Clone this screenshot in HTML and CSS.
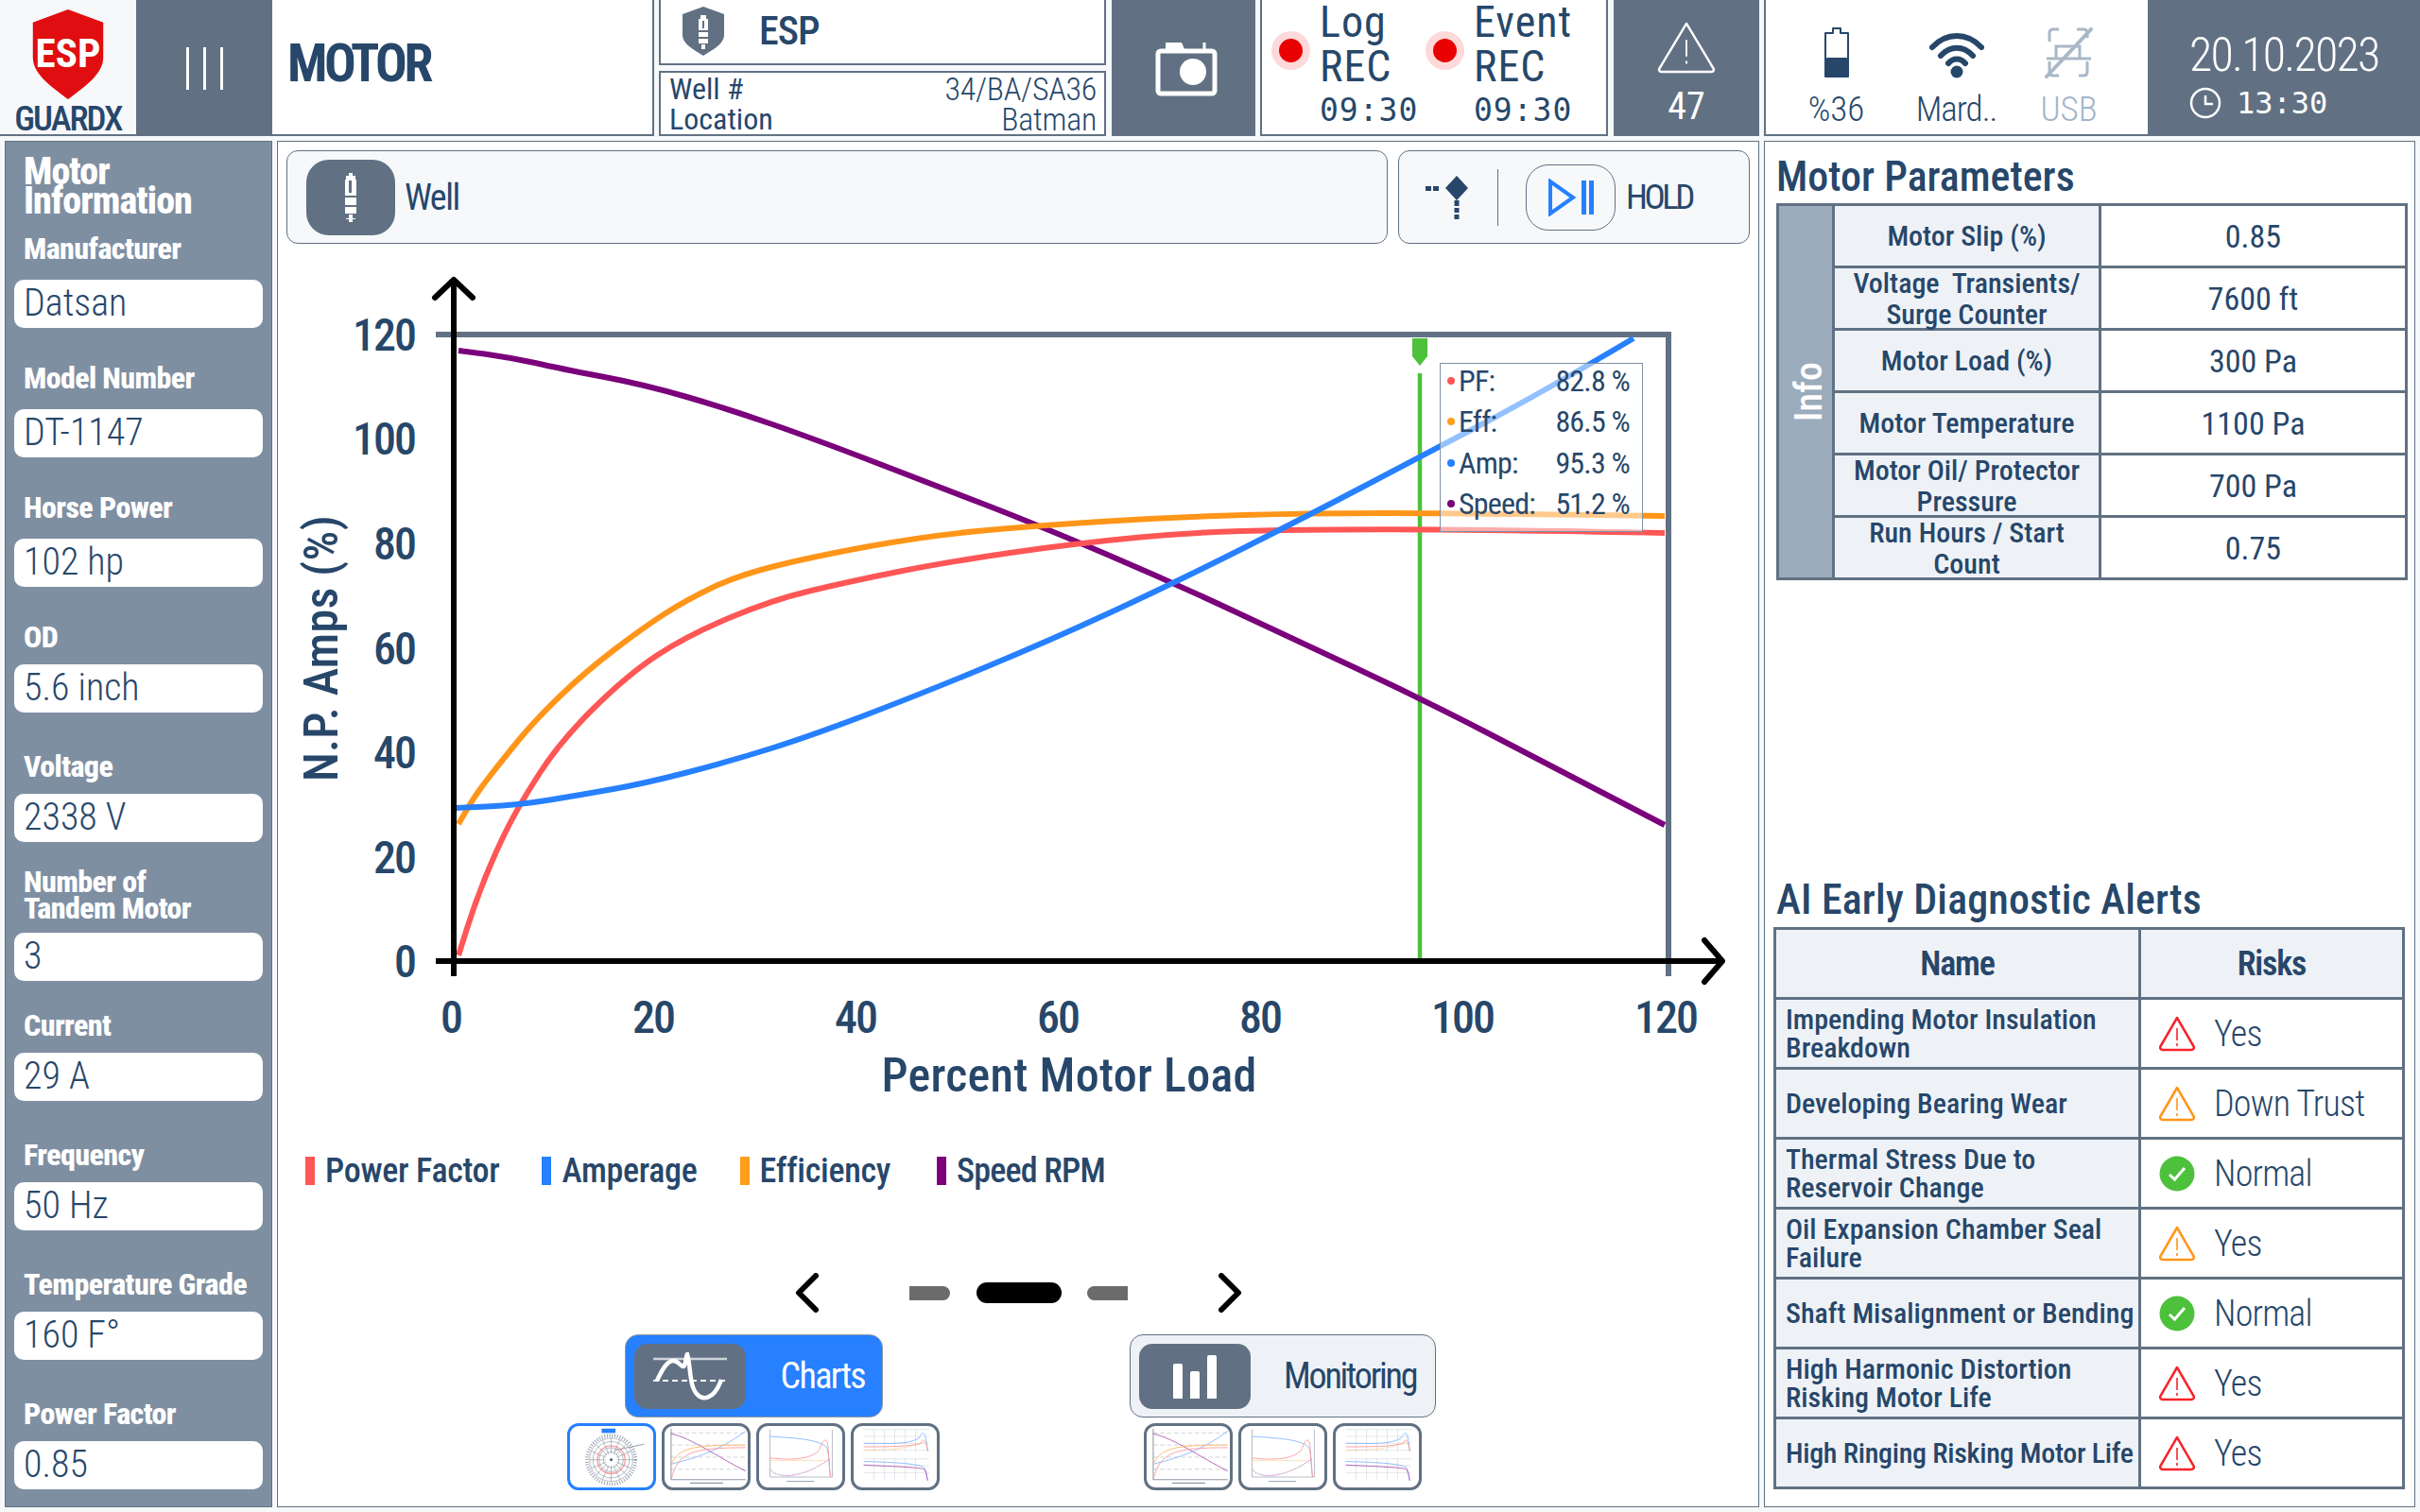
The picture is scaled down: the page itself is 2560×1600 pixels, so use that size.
FILE: index.html
```html
<!DOCTYPE html>
<html lang="en">
  <head>
    <meta charset="UTF-8" />
    <title>ESP GuardX | Motor</title>
    <link rel="stylesheet" href="styles.css">
  </head>
  <body>
    <!-- thumbnails are used in both button groups -->
    <svg class="defs" width="0" height="0">
      <symbol id="thumb-polar" viewBox="0 0 93 71">
        <rect x="35" y="3" width="16" height="5" fill="#2680ff"/>
        <g fill="none" stroke="#8d98a5" stroke-width=".7">
          <circle cx="46" cy="39" r="28" stroke-width="4" stroke-dasharray="1 2"/>
          <circle cx="46" cy="39" r="25"/><circle cx="46" cy="39" r="21"/><circle cx="46" cy="39" r="14"/><circle cx="46" cy="39" r="9"/>
          <path d="M46 14V64M21 39H71M28 21L64 57M64 21L28 57M36 16L56 62M56 16L36 62M23 29L69 49M69 29L23 49"/>
          <path d="M50 28L84 21" stroke-width="1"/>
        </g>
        <circle cx="46" cy="39" r="16" fill="none" stroke="#f08a8a" stroke-width="1.2"/>
        <circle cx="46" cy="39" r="7" fill="#fff"/>
        <circle cx="46" cy="39" r="1.5" fill="#27476a"/>
      </symbol>
      <symbol id="thumb-load" viewBox="0 0 93 71">
        <path d="M6 8H92M6 22H92M6 36H92M6 50H92" fill="none" stroke="#a8b0ba" stroke-width=".6" stroke-dasharray="5 3"/>
        <path d="M6 3V62H92" fill="none" stroke="#617183" stroke-width=".8"/>
        <path d="M6 9C30 14 60 36 92 52" fill="none" stroke="#b15db1" stroke-width="1"/>
        <path d="M6 44C30 38 60 30 92 6" fill="none" stroke="#8ab8ff" stroke-width="1"/>
        <path d="M6 44C16 25 30 22 92 22" fill="none" stroke="#ffb765" stroke-width="1"/>
        <path d="M6 62C14 30 30 25 92 25" fill="none" stroke="#ff9a9a" stroke-width="1"/>
        <path d="M28 66H66" stroke="#8d98a5" stroke-width="1.5"/>
      </symbol>
      <symbol id="thumb-speed" viewBox="0 0 93 71">
        <path d="M11 4V59H83V4" fill="none" stroke="#8d98a5" stroke-width=".7"/>
        <path d="M11 12C40 14 65 15 76 24C80 30 79 50 81 59" fill="none" stroke="#8ab8ff" stroke-width="1"/>
        <path d="M11 37C40 40 58 38 68 28C72 16 76 12 78 22C79 40 80 50 81 59" fill="none" stroke="#ff9a9a" stroke-width="1"/>
        <path d="M11 40H76" fill="none" stroke="#ffb765" stroke-width=".8" stroke-dasharray="1.500 1"/>
        <path d="M11 50C20 62 50 60 80 38" fill="none" stroke="#b15db1" stroke-width=".9" stroke-dasharray="1.500 1"/>
        <path d="M30 64H62" stroke="#8d98a5" stroke-width="1"/>
      </symbol>
      <symbol id="thumb-volt" viewBox="0 0 93 71">
        <path d="M10 4H86M10 12H86M10 20H86M10 28H86M10 38H86M10 46H86M10 54H86M22 4V30M34 4V30M46 4V30M58 4V30M70 4V30M22 37V63M34 37V63M46 37V63M58 37V63M70 37V63" fill="none" stroke="#ccd3da" stroke-width=".6"/>
        <path d="M10 20C40 20 60 22 74 14C80 2 82 10 84 29" fill="none" stroke="#8ab8ff" stroke-width="1"/>
        <path d="M10 24C40 24 62 24 76 20C80 12 82 18 84 29" fill="none" stroke="#ff9a9a" stroke-width="1"/>
        <path d="M10 28C40 28 60 26 80 19" fill="none" stroke="#ffb765" stroke-width=".8" stroke-dasharray="1.500 1"/>
        <path d="M10 41C50 42 76 44 80 48C83 52 83 60 84 63" fill="none" stroke="#8ab8ff" stroke-width="1"/>
        <path d="M10 45C50 47 76 48 80 50C83 54 83 60 84 63" fill="none" stroke="#b15db1" stroke-width="1"/>
      </symbol>
      <symbol id="warn" viewBox="0 0 38 38">
        <path d="M19 2L37 33C37 35 36 36 34 36H4C2 36 1 35 1 33Z" fill="none" stroke="currentColor" stroke-width="2.500" stroke-linejoin="round"/>
        <path d="M19 13V26M19 29V32" stroke="currentColor" stroke-width="1.600" fill="none"/>
      </symbol>
      <symbol id="ok" viewBox="0 0 38 38">
        <circle cx="19" cy="19" r="18.500" fill="#4dc03c"/>
        <path d="M11 20L16.500 25L27 13" fill="none" stroke="#fff" stroke-width="3"/>
      </symbol>
    </svg>

    <!-- top bar -->
    <header class="top">
      <div class="logo">
        <svg class="logo-shield" viewBox="0 0 78 98" width="78" height="98">
          <path d="M39 0L77 14V52C77 70 56 84 39 97C22 84 1 70 1 52V14Z" fill="#e00e10"/>
          <text class="logo-esp" x="39" y="62" text-anchor="middle">ESP</text>
        </svg>
        <span class="logo-name">GUARDX</span>
      </div>
      <div class="menu-btn"><span></span><span></span><span></span></div>
      <div class="page-title">MOTOR</div>
      <div class="well-info">
        <div class="well-name">
          <svg width="46" height="52" viewBox="0 0 46 52">
            <path d="M23 0L45 8V30C45 40 32 46 23 52C14 46 1 40 1 30V8Z" fill="#617183"/>
            <path d="M20 9h6v4h2v12h-10V13h2zM18 27h10v5h-10zM18 34h10v5h-10zM21 40h4v5h-4z" fill="#fff"/>
            <path d="M22 15h2v8h-2z" fill="#617183"/>
          </svg>
          <span>ESP</span>
        </div>
        <div class="well-table">
          <div class="well-row"><span>Well #</span><span class="well-val">34/BA/SA36</span></div>
          <div class="well-row"><span>Location</span><span class="well-val">Batman</span></div>
        </div>
      </div>
      <div class="camera">
        <svg width="66" height="60" viewBox="0 0 66 60">
          <path d="M11 10V3H28L31 10" fill="#fff"/>
          <path d="M52 10V3" stroke="#fff" stroke-width="3" fill="none"/>
          <rect x="3" y="12" width="60" height="45" rx="3" fill="none" stroke="#fff" stroke-width="5"/>
          <ellipse cx="40" cy="34" rx="14" ry="14" fill="#fff"/>
        </svg>
      </div>
      <div class="rec">
        <div class="rec-item">
          <span class="rec-dot"></span>
          <div class="rec-text"><div>Log</div><div>REC</div><div class="rec-time">09:30</div></div>
        </div>
        <div class="rec-item rec-item-event">
          <span class="rec-dot"></span>
          <div class="rec-text"><div>Event</div><div>REC</div><div class="rec-time">09:30</div></div>
        </div>
      </div>
      <div class="alarm">
        <svg width="62" height="56" viewBox="0 0 64 58">
          <path d="M32 3L62 53C62 55 61 56 59 56H5C3 56 2 55 2 53Z" fill="none" stroke="#fff" stroke-width="2.500" stroke-linejoin="round"/>
          <path d="M32 21V39M32 44V47" stroke="#fff" stroke-width="2" fill="none"/>
        </svg>
        <span>47</span>
      </div>
      <div class="status">
        <div class="status-item">
          <svg width="28" height="54" viewBox="0 0 28 54">
            <path d="M10 1H18V6H26V52H2V6H10Z" fill="none" stroke="#27476a" stroke-width="2" stroke-linejoin="round"/>
            <rect x="2" y="32" width="24" height="20" rx="2" fill="#27476a"/>
          </svg>
          <span>%36</span>
        </div>
        <div class="status-item status-wifi">
          <svg width="58" height="50" viewBox="0 0 58 50">
            <path d="M3 17C18 1 40 1 55 17M12 26C22 15 36 15 46 26M20 34C25 28 33 28 38 34" fill="none" stroke="#27476a" stroke-width="6" stroke-linecap="round"/>
            <ellipse cx="29" cy="43" rx="6.500" ry="6.500" fill="#27476a"/>
          </svg>
          <span>Mard..</span>
        </div>
        <div class="status-item status-off">
          <svg width="52" height="54" viewBox="0 0 52 54">
            <path d="M5 15V6C5 3 7 2 9 2H15M34 2H41C43 2 45 3 45 6V11M5 36V47C5 50 7 51 9 51H15M36 51H41C43 51 45 50 45 47V36" fill="none" stroke="#a9b8c7" stroke-width="3"/>
            <path d="M12 32V20H37V32M2 33H49" fill="none" stroke="#a9b8c7" stroke-width="3"/>
            <path d="M2 52L49 2" fill="none" stroke="#a9b8c7" stroke-width="4" stroke-linecap="round"/>
          </svg>
          <span>USB</span>
        </div>
      </div>
      <div class="date">
        <div class="date-day">20.10.2023</div>
        <div class="date-time">
          <svg width="34" height="34" viewBox="0 0 34 34">
            <circle cx="17" cy="17" r="15" fill="none" stroke="#fff" stroke-width="2.500"/>
            <path d="M17 9V18H25" fill="none" stroke="#fff" stroke-width="2.500"/>
          </svg>
          <span>13:30</span>
        </div>
      </div>
    </header>

    <main class="main">
      <!-- left info column -->
      <aside class="side">
        <h2 class="side-title">Motor Information</h2>
        <div class="field field-first"><p class="field-label">Manufacturer</p><div class="field-box">Datsan</div></div>
        <div class="field field-high"><p class="field-label">Model Number</p><div class="field-box">DT-1147</div></div>
        <div class="field field-high"><p class="field-label">Horse Power</p><div class="field-box">102 hp</div></div>
        <div class="field field-od"><p class="field-label">OD</p><div class="field-box">5.6 inch</div></div>
        <div class="field"><p class="field-label">Voltage</p><div class="field-box">2338 V</div></div>
        <div class="field field-two"><p class="field-label">Number of<br>Tandem Motor</p><div class="field-box">3</div></div>
        <div class="field field-cur"><p class="field-label">Current</p><div class="field-box">29 A</div></div>
        <div class="field"><p class="field-label">Frequency</p><div class="field-box">50 Hz</div></div>
        <div class="field"><p class="field-label">Temperature Grade</p><div class="field-box">160 F°</div></div>
        <div class="field"><p class="field-label">Power Factor</p><div class="field-box">0.85</div></div>
      </aside>

      <!-- center chart column -->
      <section class="center">
        <div class="tools">
          <div class="tool-well">
            <div class="well-btn">
              <svg width="18" height="52" viewBox="0 0 18 52">
                <path d="M7 0h4v3h3v4h1v17H3V7h1V3h3zM3 26h12v8H3zM3 36h12v7H3zM7 44h4v4h3v1h-3v3H7v-3H4v-1h3z" fill="#fff"/>
                <path d="M7 8h3v13H7z" fill="#617183"/>
              </svg>
            </div>
            <span>Well</span>
          </div>
          <div class="tool-hold">
            <svg class="cross" width="48" height="46" viewBox="0 0 48 46">
              <path d="M0 11h6v5H0zM8 11h6v5H8z" fill="#27476a"/>
              <path d="M33 0L45 13L33 26L21 13Z" fill="#27476a"/>
              <path d="M30.500 26h5v6h-5zM30.500 34h5v5h-5zM30.500 41h5v5h-5z" fill="#27476a"/>
            </svg>
            <span class="hold-sep"></span>
            <div class="hold-btn">
              <svg width="50" height="40" viewBox="0 0 50 40">
                <path d="M3 3V37L27 20Z" fill="none" stroke="#2680ff" stroke-width="4"/>
                <path d="M36 2h5v36h-5zM44 2h5v36h-5z" fill="#2680ff"/>
              </svg>
            </div>
            <span class="hold-text">HOLD</span>
          </div>
        </div>

        <div class="chart">
          <svg class="chart-svg" viewBox="294 258 1566 902" width="1566" height="902">
            <path d="M461 354H1765V1033" fill="none" stroke="#617183" stroke-width="6"/>
            <path d="M1502 395V1017" stroke="#4dc03c" stroke-width="4.500"/>
            <path d="M1494 358h16v19l-8 10l-8-10z" fill="#4dc03c"/>
            <g fill="none" stroke-width="6">
              <path stroke="#7b007b" d="M485 371L512.500 374.500Q540 378.500 566 384Q592 390 637 398.500Q682 407 726.500 420Q771 433 815.500 448.500Q860 464 920 487Q980 510 1039.500 533Q1099 556 1170.500 586.500Q1242 617 1307 647.500Q1372 678 1437.500 708.500Q1503 739 1571.500 774.500Q1640 810 1761 873"/>
              <path stroke="#ff9519" d="M485 872L494 856.500Q503 841 516.500 823.500Q530 806 548 784Q566 762 592.500 736.500Q619 711 650.500 687Q682 663 704 649Q726 635 753 622Q780 609 820 599Q860 589 920 578Q980 567 1039.500 561.500Q1099 556 1173 551.500Q1247 547 1316 545Q1385 543 1467 543Q1549 543 1761 546"/>
              <path stroke="#ff5656" d="M485 1011L494 982.500Q503 954 514 927Q525 900 536.500 877Q548 854 570 819.500Q592 785 628 749.500Q664 714 695 693.500Q726 673 771 654Q816 635 858 625Q900 615 950 605Q1000 595 1068.500 585Q1137 575 1206 568.500Q1275 562 1357.500 561Q1440 560 1522 560.500Q1604 561 1761 564"/>
              <path stroke="#2680ff" d="M481 855L514.500 853.500Q548 852 581.500 846.500Q615 841 648.500 835Q682 829 726.500 817.500Q771 806 815.500 792Q860 778 920 755Q980 732 1045 705Q1110 678 1176 647.500Q1242 617 1313.500 581Q1385 545 1444 514Q1503 483 1567.500 449Q1632 415 1728 358"/>
            </g>
            <g fill="none" stroke="#000" stroke-width="6">
              <path d="M480 1033V296"/>
              <path d="M461 1017H1822"/>
              <path d="M460 315L480 296L500 315" stroke-linecap="round" stroke-linejoin="round"/>
              <path d="M1803 995L1822 1017L1803 1039" stroke-linecap="round" stroke-linejoin="round"/>
            </g>
            <g class="tick tick-y" text-anchor="end">
              <text x="439" y="371">120</text><text x="439" y="481">100</text><text x="439" y="592">80</text>
              <text x="439" y="703">60</text><text x="439" y="813">40</text><text x="439" y="924">20</text><text x="439" y="1034">0</text>
            </g>
            <g class="tick" text-anchor="middle">
              <text x="477" y="1093">0</text><text x="691" y="1093">20</text><text x="905" y="1093">40</text><text x="1119" y="1093">60</text>
              <text x="1333" y="1093">80</text><text x="1547" y="1093">100</text><text x="1762" y="1093">120</text>
            </g>
            <text class="axis-title" x="1131" y="1155" text-anchor="middle">Percent Motor Load</text>
            <text class="axis-title" transform="translate(357 686) rotate(-90)" text-anchor="middle">N.P. Amps (%)</text>
          </svg>
          <div class="cursor-tip">
            <div class="tip-row"><i class="tip-dot dot-red"></i><span>PF:</span><b>82.8 %</b></div>
            <div class="tip-row"><i class="tip-dot dot-orange"></i><span>Eff:</span><b>86.5 %</b></div>
            <div class="tip-row"><i class="tip-dot dot-blue"></i><span>Amp:</span><b>95.3 %</b></div>
            <div class="tip-row"><i class="tip-dot dot-purple"></i><span>Speed:</span><b>51.2 %</b></div>
          </div>
        </div>

        <div class="legend">
          <div class="legend-item"><i class="dot-red"></i>Power Factor</div>
          <div class="legend-item"><i class="dot-blue"></i>Amperage</div>
          <div class="legend-item"><i class="dot-orange"></i>Efficiency</div>
          <div class="legend-item"><i class="dot-purple"></i>Speed RPM</div>
        </div>

        <div class="pager">
          <svg width="25" height="42" viewBox="0 0 25 42"><path d="M22 3L4 21L22 39" fill="none" stroke="#000" stroke-width="6" stroke-linecap="round" stroke-linejoin="round"/></svg>
          <span class="pager-dash pager-left"></span>
          <span class="pager-now"></span>
          <span class="pager-dash pager-right"></span>
          <svg width="25" height="42" viewBox="0 0 25 42"><path d="M3 3L21 21L3 39" fill="none" stroke="#000" stroke-width="6" stroke-linecap="round" stroke-linejoin="round"/></svg>
        </div>

        <div class="nav">
          <div class="nav-group nav-charts">
            <div class="nav-btn nav-btn-on">
              <div class="nav-icon">
                <svg width="118" height="69" viewBox="0 0 118 69">
                  <path d="M20 16H98" stroke="#cfd4da" stroke-width="2.500" fill="none"/>
                  <path d="M20 39H98" stroke="#fff" stroke-width="2" stroke-dasharray="6 4" fill="none"/>
                  <path d="M24 39C30 26 35 18 41 18C47 18 49 24 52 24C54 24 55 11 56 11C60 25 58 44 66 53C72 60 84 60 92 38" fill="none" stroke="#fff" stroke-width="4.500"/>
                </svg>
              </div>
              <span class="nav-label">Charts</span>
            </div>
            <div class="thumbs">
              <svg class="thumb thumb-on"><use href="#thumb-polar"/></svg>
              <svg class="thumb"><use href="#thumb-load"/></svg>
              <svg class="thumb"><use href="#thumb-speed"/></svg>
              <svg class="thumb"><use href="#thumb-volt"/></svg>
            </div>
          </div>
          <div class="nav-group">
            <div class="nav-btn nav-btn-mon">
              <div class="nav-icon nav-bars"><span class="bar-a"></span><span class="bar-b"></span><span class="bar-c"></span></div>
              <span class="nav-label">Monitoring</span>
            </div>
            <div class="thumbs">
              <svg class="thumb"><use href="#thumb-load"/></svg>
              <svg class="thumb"><use href="#thumb-speed"/></svg>
              <svg class="thumb"><use href="#thumb-volt"/></svg>
            </div>
          </div>
        </div>
      </section>

      <!-- right tables column -->
      <section class="right">
        <h2 class="right-title">Motor Parameters</h2>
        <table class="params">
          <tr><td class="params-info" rowspan="6"><span>Info</span></td><td class="params-label">Motor Slip (%)</td><td>0.85</td></tr>
          <tr><td class="params-label"><div class="two-line">Voltage&nbsp; Transients/<br>Surge Counter</div></td><td>7600 ft</td></tr>
          <tr><td class="params-label">Motor Load (%)</td><td>300 Pa</td></tr>
          <tr><td class="params-label">Motor Temperature</td><td>1100 Pa</td></tr>
          <tr><td class="params-label"><div class="two-line">Motor Oil/ Protector<br>Pressure</div></td><td>700 Pa</td></tr>
          <tr><td class="params-label"><div class="two-line">Run Hours / Start<br>Count</div></td><td>0.75</td></tr>
        </table>

        <h2 class="right-title right-title-ai">AI Early Diagnostic Alerts</h2>
        <table class="alerts">
          <tr><th>Name</th><th>Risks</th></tr>
          <tr><td class="alert-name">Impending Motor Insulation<br>Breakdown</td><td><div class="risk"><svg class="risk-icon warn-red"><use href="#warn"/></svg>Yes</div></td></tr>
          <tr><td class="alert-name">Developing Bearing Wear</td><td><div class="risk"><svg class="risk-icon warn-orange"><use href="#warn"/></svg>Down Trust</div></td></tr>
          <tr><td class="alert-name">Thermal Stress Due to<br>Reservoir Change</td><td><div class="risk"><svg class="risk-icon"><use href="#ok"/></svg>Normal</div></td></tr>
          <tr><td class="alert-name">Oil Expansion Chamber Seal<br>Failure</td><td><div class="risk"><svg class="risk-icon warn-orange"><use href="#warn"/></svg>Yes</div></td></tr>
          <tr><td class="alert-name">Shaft Misalignment or Bending</td><td><div class="risk"><svg class="risk-icon"><use href="#ok"/></svg>Normal</div></td></tr>
          <tr><td class="alert-name">High Harmonic Distortion<br>Risking Motor Life</td><td><div class="risk"><svg class="risk-icon warn-red"><use href="#warn"/></svg>Yes</div></td></tr>
          <tr><td class="alert-name alert-tight">High Ringing Risking Motor Life</td><td><div class="risk"><svg class="risk-icon warn-red"><use href="#warn"/></svg>Yes</div></td></tr>
        </table>
      </section>
    </main>
  </body>
</html>
```

FILE: styles.css
```css
/* reset */
* {
  margin: 0;
  padding: 0;
  box-sizing: border-box;
}
body {
  width: 2560px;
  height: 1600px;
  overflow: hidden;
  background-color: #f6f8fa;
  color: #27476a;
  font-family: "Roboto", sans-serif;
  font-stretch: 75%;
}
.defs {
  position: absolute;
}

/* top bar */
.top {
  display: flex;
  height: 144px;
}
.logo {
  width: 144px;
  border-bottom: 2px solid #617183;
  display: flex;
  flex-direction: column;
  align-items: center;
  padding-top: 10px;
}
.logo-shield {
  display: block;
}
.logo-esp {
  font-size: 44px;
  font-weight: 700;
  fill: #fff;
}
.logo-name {
  font-size: 37px;
  font-weight: 500;
  line-height: 32px;
  margin-top: 4px;
  letter-spacing: -2px;
}
.menu-btn {
  width: 144px;
  background-color: #617183;
  display: flex;
  justify-content: center;
  align-items: center;
  gap: 15px;
}
.menu-btn span {
  width: 3px;
  height: 45px;
  background-color: #fff;
}
.page-title {
  width: 404px;
  background-color: #fff;
  border-right: 2px solid #617183;
  border-bottom: 2px solid #617183;
  padding: 40px 0 0 16px;
  font-size: 56px;
  font-weight: 700;
  line-height: 54px;
  letter-spacing: -3.5px;
}
.well-info {
  width: 473px;
  margin-left: 5px;
  display: flex;
  flex-direction: column;
  gap: 6px;
}
.well-name {
  height: 69px;
  background-color: #fff;
  border: 2px solid #617183;
  border-top: none;
  display: flex;
  align-items: center;
  padding: 0 0 2px 22px;
  gap: 36px;
  font-size: 42px;
  font-weight: 500;
  letter-spacing: -1px;
}
.well-table {
  flex: 1;
  background-color: #fff;
  border: 2px solid #617183;
  padding: 1px 8px 0 9px;
  font-size: 32px;
  line-height: 32px;
}
.well-row {
  display: flex;
  justify-content: space-between;
}
.well-val {
  font-size: 34px;
  font-weight: 300;
  letter-spacing: -0.3px;
}
.camera {
  width: 152px;
  margin-left: 6px;
  background-color: #617183;
  display: flex;
  justify-content: center;
  align-items: center;
  padding-left: 5px;
}
.rec {
  width: 368px;
  margin-left: 5px;
  background-color: #fff;
  border: 2px solid #617183;
  border-top: none;
  display: flex;
}
.rec-item {
  display: flex;
  width: 163px;
  margin-left: 10px;
}
.rec-item-event {
  margin-left: 0;
}
.rec-dot {
  width: 41px;
  height: 41px;
  margin-top: 33px;
  border-radius: 50%;
  background-color: #fdd9d9;
  position: relative;
  flex-shrink: 0;
}
.rec-dot::after {
  content: "";
  position: absolute;
  left: 8px;
  top: 8px;
  width: 25px;
  height: 25px;
  border-radius: 50%;
  background-color: #e90000;
}
.rec-text {
  margin-left: 10px;
  font-size: 46px;
  line-height: 47px;
  font-weight: 400;
  letter-spacing: 1px;
}
.rec-time {
  margin-top: 2px;
  font-family: "DejaVu Sans Mono", monospace;
  font-stretch: normal;
  font-size: 33px;
  font-weight: 400;
  line-height: 42px;
  letter-spacing: 1px;
}
.alarm {
  width: 154px;
  margin-left: 6px;
  background-color: #617183;
  color: #fff;
  display: flex;
  flex-direction: column;
  align-items: center;
  padding-top: 22px;
  font-size: 40px;
  line-height: 44px;
  gap: 13px;
}
.status {
  width: 406px;
  margin-left: 5px;
  background-color: #fff;
  border-left: 2px solid #617183;
  border-bottom: 2px solid #617183;
  display: flex;
  padding-left: 13px;
}
.status-item {
  width: 123px;
  height: 100%;
  display: flex;
  flex-direction: column;
  align-items: center;
  justify-content: flex-end;
  padding-bottom: 6px;
  gap: 13px;
  font-size: 37px;
  line-height: 40px;
  font-weight: 300;
}
.status-wifi {
  padding-left: 8px;
  letter-spacing: -1px;
}
.status-off {
  color: #a2b5c9;
}
.date {
  width: 288px;
  background-color: #617183;
  color: #fff;
  padding: 30px 0 0 44px;
}
.date-day {
  font-size: 50px;
  line-height: 56px;
  font-weight: 300;
  letter-spacing: -1.8px;
}
.date-time {
  display: flex;
  align-items: center;
  gap: 16px;
  margin-top: 3px;
  font-family: "DejaVu Sans Mono", monospace;
  font-stretch: normal;
  font-size: 32px;
  line-height: 40px;
}

/* columns */
.main {
  display: flex;
  height: 1446px;
  margin-top: 5px;
  padding-left: 5px;
  gap: 5px;
}

/* left column */
.side {
  width: 283px;
  background-color: #7f8fa2;
  border: 1px solid #617183;
  color: #fff;
}
.side-title {
  font-size: 40px;
  line-height: 31px;
  font-weight: 800;
  padding: 16px 50px 0 19px;
  letter-spacing: -0.9px;
}
.field {
  margin-top: 40px;
}
.field-first {
  margin-top: 18px;
}
.field-high {
  margin-top: 36px;
}
.field-od {
  margin-top: 36px;
}
.field-two {
  margin-top: 28px;
}
.field-cur {
  margin-top: 30px;
}
.field-label {
  font-size: 32px;
  line-height: 34px;
  font-weight: 800;
  padding-left: 19px;
  margin-bottom: 12px;
  letter-spacing: -0.6px;
  white-space: nowrap;
}
.field-first .field-label,
.field-high .field-label {
  margin-bottom: 16px;
}
.field-two .field-label {
  line-height: 28px;
}
.field-box {
  height: 51px;
  margin: 0 9px;
  padding-left: 10px;
  border-radius: 10px;
  background-color: #fff;
  color: #27476a;
  font-size: 40px;
  line-height: 50px;
  font-weight: 300;
}

/* center column */
.center {
  width: 1568px;
  background-color: #fff;
  border: 1px solid #617183;
}
.tools {
  display: flex;
  gap: 11px;
  padding: 9px 9px 0 9px;
}
.tool-well,
.tool-hold {
  height: 99px;
  background-color: #f6f8fa;
  border: 1px solid #617183;
  border-radius: 12px;
  display: flex;
  align-items: center;
}
.tool-well {
  flex: 1;
  padding-left: 20px;
  gap: 10px;
  font-size: 38px;
  letter-spacing: -1.5px;
}
.well-btn {
  width: 94px;
  height: 80px;
  border-radius: 24px;
  background-color: #617183;
  display: flex;
  justify-content: center;
  align-items: center;
}
.tool-hold {
  width: 372px;
  padding-left: 28px;
}
.hold-sep {
  width: 1px;
  height: 60px;
  margin-left: 28px;
  background-color: #617183;
}
.hold-btn {
  width: 95px;
  height: 70px;
  margin: 0 11px 0 29px;
  border: 1px solid #617183;
  border-radius: 24px;
  display: flex;
  justify-content: center;
  align-items: center;
}
.hold-text {
  font-size: 37px;
  letter-spacing: -3.5px;
}

/* chart */
.chart {
  position: relative;
  height: 902px;
}
.chart-svg {
  display: block;
}
.tick {
  font-size: 48px;
  font-weight: 500;
  fill: #27476a;
  letter-spacing: -2px;
}
.axis-title {
  font-size: 50px;
  font-weight: 500;
  fill: #27476a;
  letter-spacing: 0.3px;
}
.cursor-tip {
  position: absolute;
  left: 1229px;
  top: 126px;
  width: 215px;
  height: 179px;
  padding: 0 13px 0 7px;
  background-color: rgba(255, 255, 255, 0.5);
  border: 1px solid #7f8fa2;
}
.tip-row {
  display: flex;
  align-items: center;
  height: 43.5px;
  padding-bottom: 8px;
  font-size: 32px;
  letter-spacing: -0.8px;
}
.tip-row span {
  margin-left: 4px;
  flex: 1;
}
.tip-row b {
  font-weight: 400;
}
.tip-dot {
  width: 8px;
  height: 8px;
  border-radius: 50%;
}
.dot-red {
  background-color: #ff5656;
}
.dot-orange {
  background-color: #ff9f19;
}
.dot-blue {
  background-color: #2680ff;
}
.dot-purple {
  background-color: #7b007b;
}
.legend {
  display: flex;
  margin-top: 59px;
  padding-left: 29px;
  gap: 45px;
}
.legend-item {
  display: flex;
  align-items: center;
  gap: 11px;
  height: 40px;
  font-size: 36px;
  font-weight: 500;
  letter-spacing: -0.3px;
}
.legend-item:last-child {
  margin-left: 4px;
  letter-spacing: -0.8px;
}
.legend-item i {
  width: 10px;
  height: 30px;
}

/* pager */
.pager {
  display: flex;
  justify-content: center;
  align-items: center;
  height: 42px;
  margin-top: 88px;
}
.pager-dash {
  width: 43px;
  height: 15px;
  background-color: #6b6b6b;
}
.pager-left {
  margin: 0 28px 0 96px;
  border-radius: 0 8px 8px 0;
}
.pager-right {
  margin: 0 96px 0 27px;
  border-radius: 8px 0 0 8px;
}
.pager-now {
  width: 90px;
  height: 22px;
  border-radius: 11px;
  background-color: #000;
}

/* bottom buttons */
.nav {
  display: flex;
  padding-left: 306px;
  gap: 201px;
  margin-top: 23px;
}
.nav-group {
  display: flex;
  flex-direction: column;
  align-items: center;
}
.nav-btn {
  display: flex;
  align-items: center;
  height: 88px;
  padding: 0 9px;
  background-color: #eef2f7;
  border: 1px solid #617183;
  border-radius: 14px;
  font-size: 38px;
  letter-spacing: -1.6px;
}
.nav-label {
  margin-left: 37px;
}
.nav-btn-on {
  width: 273px;
  background-color: #2680ff;
  border-color: #8d98a5;
  color: #fff;
}
.nav-btn-mon {
  width: 324px;
  letter-spacing: -2.2px;
}
.nav-btn-mon .nav-label {
  margin-left: 35px;
}
.nav-icon {
  width: 118px;
  height: 69px;
  border-radius: 14px;
  background-color: #617183;
}
.nav-bars {
  display: flex;
  justify-content: center;
  align-items: flex-end;
  gap: 8px;
  padding-bottom: 11px;
}
.nav-bars span {
  width: 10px;
  background-color: #fff;
  border-radius: 2px 2px 0 0;
}
.bar-a {
  height: 37px;
}
.bar-b {
  height: 29px;
}
.bar-c {
  height: 46px;
}
.thumbs {
  display: flex;
  gap: 6px;
  margin-top: 6px;
}
.thumb {
  width: 94px;
  height: 71px;
  background-color: #fff;
  border: 3px solid #617183;
  border-radius: 12px;
}
.thumb-on {
  border-color: #2680ff;
}

/* right column */
.right {
  width: 689px;
  background-color: #fff;
  border: 1px solid #617183;
  padding: 10px 0 0 12px;
}
.right-title {
  font-size: 44px;
  line-height: 55px;
  font-weight: 500;
}
.right-title-ai {
  margin: 311px 0 2px;
  line-height: 54px;
  letter-spacing: 0.15px;
}
table {
  border-collapse: collapse;
  table-layout: fixed;
}
.params {
  width: 668px;
}
.params td {
  height: 66px;
  border: 3px solid #617183;
  text-align: center;
  font-size: 34px;
  font-weight: 400;
}
.params td.params-info {
  width: 59px;
  background-color: #9aabbc;
  color: #fff;
  font-size: 40px;
  font-weight: 500;
}
.params-info span {
  display: inline-block;
  transform: rotate(-90deg);
}
.params td.params-label {
  width: 282px;
  background-color: #eef2f7;
  font-weight: 500;
  font-size: 30px;
  line-height: 33px;
}
.two-line {
  margin: -3px 0;
}
.alerts {
  width: 668px;
  margin-left: -3px;
}
.alerts th {
  height: 74px;
  border: 3px solid #617183;
  background-color: #eef2f7;
  font-size: 36px;
  font-weight: 600;
  letter-spacing: -1.2px;
}
.alerts td {
  height: 74px;
  border: 3px solid #617183;
}
.alerts th:first-child {
  width: 386px;
}
.alert-name {
  background-color: #eef2f7;
  padding-left: 10px;
  font-size: 30px;
  line-height: 30px;
  font-weight: 500;
  white-space: nowrap;
}
.alert-tight {
  letter-spacing: -0.3px;
}
.risk {
  display: flex;
  align-items: center;
  padding-left: 19px;
  font-size: 38px;
  font-weight: 300;
  letter-spacing: -0.8px;
}
.risk-icon {
  width: 38px;
  height: 38px;
  margin-right: 20px;
}
.warn-red {
  color: #f5242c;
}
.warn-orange {
  color: #ff9519;
}
```
